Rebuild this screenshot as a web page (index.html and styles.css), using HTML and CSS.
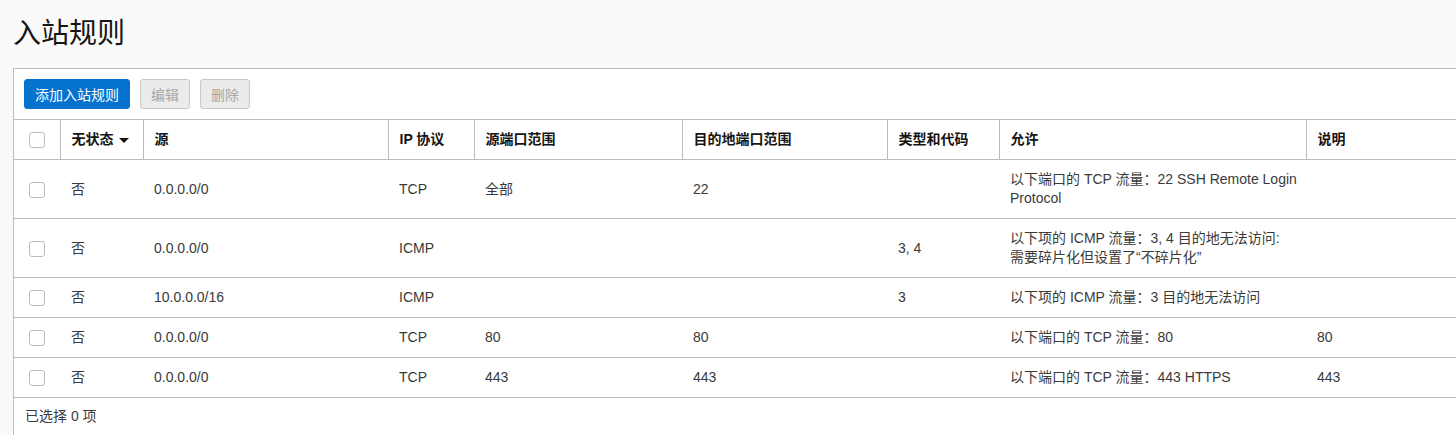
FILE: index.html
```html
<!DOCTYPE html>
<html lang="zh-CN">
<head>
    <meta charset="UTF-8">
    <title>入站规则</title>
    <link rel="stylesheet" href="styles.css">
</head>
<body>
    <h1 class="page-title">入站规则</h1>
    <section class="panel">
        <div class="toolbar">
            <button class="btn btn-primary">添加入站规则</button>
            <button class="btn btn-disabled" disabled>编辑</button>
            <button class="btn btn-disabled" disabled>删除</button>
        </div>
        <table class="rules">
            <colgroup>
                <col style="width:46px">
                <col style="width:83px">
                <col style="width:245px">
                <col style="width:86px">
                <col style="width:208px">
                <col style="width:205px">
                <col style="width:112px">
                <col style="width:307px">
                <col style="width:200px">
            </colgroup>
            <thead>
                <tr>
                    <th class="check"><span class="box"></span></th>
                    <th>无状态 <span class="caret"></span></th>
                    <th>源</th>
                    <th>IP 协议</th>
                    <th>源端口范围</th>
                    <th>目的地端口范围</th>
                    <th>类型和代码</th>
                    <th>允许</th>
                    <th>说明</th>
                </tr>
            </thead>
            <tbody>
                <tr>
                    <td class="check"><span class="box"></span></td>
                    <td>否</td>
                    <td>0.0.0.0/0</td>
                    <td>TCP</td>
                    <td>全部</td>
                    <td>22</td>
                    <td></td>
                    <td>以下端口的 TCP 流量：22 SSH Remote Login<br>Protocol</td>
                    <td></td>
                </tr>
                <tr>
                    <td class="check"><span class="box"></span></td>
                    <td>否</td>
                    <td>0.0.0.0/0</td>
                    <td>ICMP</td>
                    <td></td>
                    <td></td>
                    <td>3, 4</td>
                    <td>以下项的 ICMP 流量：3, 4 目的地无法访问:<br>需要碎片化但设置了“不碎片化”</td>
                    <td></td>
                </tr>
                <tr>
                    <td class="check"><span class="box"></span></td>
                    <td>否</td>
                    <td>10.0.0.0/16</td>
                    <td>ICMP</td>
                    <td></td>
                    <td></td>
                    <td>3</td>
                    <td>以下项的 ICMP 流量：3 目的地无法访问</td>
                    <td></td>
                </tr>
                <tr>
                    <td class="check"><span class="box"></span></td>
                    <td>否</td>
                    <td>0.0.0.0/0</td>
                    <td>TCP</td>
                    <td>80</td>
                    <td>80</td>
                    <td></td>
                    <td>以下端口的 TCP 流量：80</td>
                    <td>80</td>
                </tr>
                <tr>
                    <td class="check"><span class="box"></span></td>
                    <td>否</td>
                    <td>0.0.0.0/0</td>
                    <td>TCP</td>
                    <td>443</td>
                    <td>443</td>
                    <td></td>
                    <td>以下端口的 TCP 流量：443 HTTPS</td>
                    <td>443</td>
                </tr>
            </tbody>
        </table>
        <div class="footer">已选择 0 项</div>
    </section>
</body>
</html>
```

FILE: styles.css
```css
html, body {
    margin: 0;
    padding: 0;
}
body {
    background-color: #fafafa;
    font-family: "Liberation Sans", Arial, "Noto Sans CJK SC", sans-serif;
    font-size: 14px;
    color: #3a3a3a;
    overflow: hidden;
    padding-left: 13px;
}
.page-title {
    margin: 0;
    padding: 14px 0 0;
    height: 68px;
    box-sizing: border-box;
    font-size: 28px;
    font-weight: normal;
    line-height: 40px;
    color: #161513;
}
.panel {
    width: 1494px;
    background-color: #fff;
    border: 1px solid #b9bdc2;
    border-right: none;
    border-bottom: none;
}
.toolbar {
    display: flex;
    gap: 10px;
    padding: 10px;
}
.btn {
    height: 30px;
    padding: 0 10px;
    font-family: inherit;
    font-size: 14px;
    border-radius: 3px;
    border: 1px solid transparent;
    cursor: pointer;
}
.btn-primary {
    background-color: #0572ce;
    border-color: #0572ce;
    color: #fff;
}
.btn-disabled {
    background-color: #ebebeb;
    border-color: #c8c9cb;
    color: #a7a7a7;
    cursor: default;
}
.rules {
    width: 1492px;
    table-layout: fixed;
    border-collapse: collapse;
}
.rules th, .rules td {
    padding: 10px 6px 10px 11px;
    line-height: 19px;
    text-align: left;
    vertical-align: middle;
    white-space: nowrap;
    border-top: 1px solid #b9bdc2;
    border-bottom: 1px solid #b9bdc2;
}
.rules th {
    font-weight: bold;
    color: #161513;
}
.rules th + th {
    border-left: 1px solid #b9bdc2;
}
.rules .check {
    padding: 0;
    text-align: center;
}
.box {
    display: inline-block;
    width: 14px;
    height: 14px;
    border: 1px solid #b9bdc2;
    border-radius: 3px;
    background-color: #fff;
    vertical-align: middle;
}
.caret {
    display: inline-block;
    width: 0;
    height: 0;
    margin-left: 2px;
    border-left: 5px solid transparent;
    border-right: 5px solid transparent;
    border-top: 5px solid #161513;
    vertical-align: middle;
}
.footer {
    padding: 9px 11px 9px;
    line-height: 19px;
}
```
